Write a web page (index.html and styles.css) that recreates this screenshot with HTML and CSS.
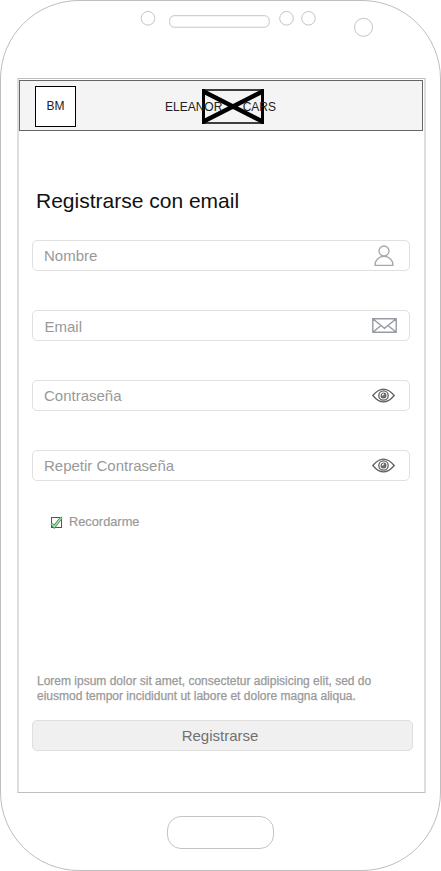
FILE: index.html
```html
<!DOCTYPE html>
<html lang="es">
<head>
<meta charset="utf-8">
<title>Eleanor Cars</title>
<link rel="stylesheet" href="styles.css">
</head>
<body>
<div class="phone">
  <svg class="sensors" viewBox="0 0 439 77" aria-hidden="true">
    <circle cx="147" cy="17.3" r="6.8"/>
    <rect x="168.7" y="14.7" width="99.5" height="11.5" rx="4.5"/>
    <circle cx="285.5" cy="17.3" r="6.8"/>
    <circle cx="307.5" cy="17.3" r="6.8"/>
    <circle cx="362.5" cy="26.3" r="9"/>
  </svg>
  <main class="screen">
    <header class="topbar">
      <div class="menu">BM</div>
      <div class="brand">
        <svg class="logo" width="62" height="35" viewBox="0 0 62 35" aria-hidden="true">
          <path d="M1.5 2.5 60.5 32.5M60.5 2.5 1.5 32.5" stroke-width="4.4"/>
          <path d="M0 1H62M0 34H62" stroke-width="1.7"/>
          <path d="M1.5 0V35M60.5 0V35" stroke-width="3"/>
        </svg>
        <span class="name">ELEANOR</span><span class="name">CARS</span>
      </div>
    </header>
    <h1>Registrarse con email</h1>
    <form class="form">
      <div class="field"><span>Nombre</span>
        <svg class="person" width="20" height="22" viewBox="0 0 20 22"><circle cx="10" cy="6" r="5"/><path d="M1 20.3C1 8.500 19 8.500 19 20.300Z"/></svg>
      </div>
      <div class="field shifted email"><span>Email</span>
        <svg class="mail" width="25" height="15" viewBox="0 0 25 15"><path d="M.8.8H24.2V14.2H.8ZM.8.8 12.500 10.300 24.200.8M.8 14.200 9 7.500M24.200 14.200 16 7.500"/></svg>
      </div>
      <div class="field"><span>Contraseña</span>
        <svg class="eye" width="23" height="15" viewBox="0 0 23 15"><path d="M.8 7.500Q11.500-5.300 22.200 7.500Q11.500 20.300.8 7.500Z"/><circle cx="11.500" cy="7.500" r="4.700"/><circle class="pupil" cx="11.500" cy="7.500" r="2.300"/><path class="shine" d="M10.300 7.500Q10.300 6 12 5.800"/></svg>
      </div>
      <div class="field shifted"><span>Repetir Contraseña</span>
        <svg class="eye" width="23" height="15" viewBox="0 0 23 15"><path d="M.8 7.500Q11.500-5.300 22.200 7.500Q11.500 20.300.8 7.500Z"/><circle cx="11.500" cy="7.500" r="4.700"/><circle class="pupil" cx="11.500" cy="7.500" r="2.300"/><path class="shine" d="M10.300 7.500Q10.300 6 12 5.800"/></svg>
      </div>
      <div class="remember">
        <svg width="13" height="13" viewBox="0 0 13 13"><rect class="box" x="1.500" y="1.500" width="10" height="10"/><path class="tick-edge" d="M1.700 7.800 4.200 10.700 11.300 1.700"/><path class="tick" d="M1.700 7.800 4.200 10.700 11.300 1.700"/></svg>
        <span>Recordarme</span>
      </div>
      <p class="legal">Lorem ipsum dolor sit amet, consectetur adipisicing elit, sed do<br>eiusmod tempor incididunt ut labore et dolore magna aliqua.</p>
      <button class="submit" type="button">Registrarse</button>
    </form>
  </main>
  <div class="home"></div>
</div>
</body>
</html>
```

FILE: styles.css
```css
* { box-sizing: border-box; }
body {
  margin: 0;
  background: #fff;
  font-family: "Liberation Sans", Arial, sans-serif;
}
.phone {
  width: 441px;
  height: 871px;
  border: 1px solid #bebebe;
  border-radius: 79px;
}
.sensors {
  display: block;
  width: 439px;
  height: 77px;
  fill: none;
  stroke: #c4c4c4;
}
.screen {
  width: 409px;
  height: 715px;
  margin-left: 16px;
  border: solid #bdbdbd;
  border-width: 1px 2px 1px;
  border-left-color: #dedede;
  border-right-color: #dedede;
}
.topbar {
  display: flex;
  width: 404px;
  height: 51px;
  margin-top: 1px;
  border: 1px solid #666;
  background: #f4f4f4;
}
.menu {
  width: 41px;
  height: 41px;
  margin: 5px 0 0 15px;
  border: 1px solid #000;
  background: #fff;
  font-size: 12px;
  line-height: 39px;
  text-align: center;
  color: #222;
}
.brand {
  position: relative;
  display: flex;
  justify-content: space-between;
  width: 111px;
  margin-left: 89px;
  font-size: 12px;
  line-height: 52px;
}
.name { position: relative; color: #222; }
.logo {
  position: absolute;
  top: 8px;
  left: 37px;
  fill: none;
  stroke: #000;
}
h1 {
  margin: 57px 0 0 17px;
  font-size: 21px;
  font-weight: 400;
  line-height: 26px;
  color: #111;
}
.form {
  width: 381px;
  margin: 26px 0 0 13px;
}
.field {
  display: flex;
  align-items: center;
  justify-content: space-between;
  width: 378px;
  height: 31px;
  margin-bottom: 39px;
  padding: 0 14px 0 11px;
  border: 1px solid #e0e0e0;
  border-radius: 5px;
  font-size: 15px;
  color: #999;
}
.shifted { margin-left: -.5px; }
.shifted span { padding-left: .5px; }
.email span { padding: 2px 0 0 1px; }
.email { padding-right: 12px; }
.field svg { fill: none; }
.person { stroke: #a3a7ae; stroke-width: 1.3; margin-right: 1px; }
.mail { stroke: #969ba3; stroke-width: 1.4; }
.eye { stroke: #606060; stroke-width: 1.3; margin-top: -1px; }
.eye .pupil { fill: #777; }
.eye .shine { stroke: #fff; stroke-width: 1.3; }
.remember {
  display: flex;
  align-items: center;
  gap: 6px;
  height: 16px;
  margin: -6px 0 0 18px;
  font-size: 12.8px;
  line-height: 14px;
  color: #999;
}
.remember span { -webkit-text-stroke: .2px #999; }
.remember svg { fill: none; }
.box { stroke: #555; }
.tick-edge { stroke: #367b40; stroke-width: 2.8; }
.tick { stroke: #9ce5a0; stroke-width: 1.6; }
.legal {
  margin: 144px 0 0 5px;
  font-size: 12px;
  line-height: 15px;
  color: #999;
  -webkit-text-stroke: .25px #999;
  white-space: nowrap;
}
.submit {
  display: block;
  width: 381px;
  height: 31px;
  margin-top: 16px;
  padding: 0 5px 0 0;
  border: 1px solid #dfdfdf;
  border-radius: 5px;
  background: #f0f0f0;
  font: 15px "Liberation Sans", Arial, sans-serif;
  color: #707070;
}
.home {
  width: 107px;
  height: 33px;
  margin: 23px 0 0 166px;
  border: 1px solid #c4c4c4;
  border-radius: 14px;
}
```
